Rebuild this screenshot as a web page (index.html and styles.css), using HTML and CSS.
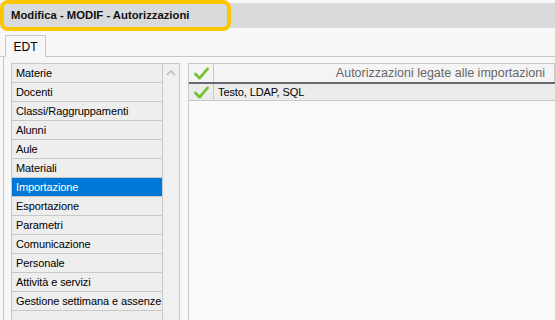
FILE: index.html
```html
<!DOCTYPE html>
<html>
<head>
<meta charset="utf-8">
<link rel="stylesheet" href="styles.css">
</head>
<body>
<div class="header">
  <div class="title-box">Modifica - MODIF - Autorizzazioni</div>
</div>
<div class="tabstrip">
  <div class="tab">EDT</div>
</div>
<div class="panel">
  <div class="list-frame">
    <ul class="list">
      <li>Materie</li>
      <li>Docenti</li>
      <li>Classi/Raggruppamenti</li>
      <li>Alunni</li>
      <li>Aule</li>
      <li>Materiali</li>
      <li class="selected">Importazione</li>
      <li>Esportazione</li>
      <li>Parametri</li>
      <li>Comunicazione</li>
      <li>Personale</li>
      <li>Attività e servizi</li>
      <li>Gestione settimana e assenze</li>
      <li></li>
    </ul>
    <div class="scroll">
      <svg width="12" height="8" viewBox="0 0 12 8"><path d="M2 6 L6 2 L10 6" fill="none" stroke="#bdbdbd" stroke-width="1.6"/></svg>
    </div>
  </div>
  <div class="grid">
    <div class="grid-head">
      <div class="check-cell"><svg class="check" viewBox="0 0 16 14"><path d="M1.5 7.5 L6 12 L14.5 2" fill="none" stroke="#76c035" stroke-width="3" stroke-linecap="round" stroke-linejoin="round"/></svg></div>
      <div class="head-label">Autorizzazioni legate alle importazioni</div>
    </div>
    <div class="grid-row">
      <div class="check-cell"><svg class="check" viewBox="0 0 16 14"><path d="M1.5 7.5 L6 12 L14.5 2" fill="none" stroke="#76c035" stroke-width="3" stroke-linecap="round" stroke-linejoin="round"/></svg></div>
      <div class="row-label">Testo, LDAP, SQL</div>
    </div>
  </div>
</div>
</body>
</html>
```

FILE: styles.css
```css
html, body {
  margin: 0;
  padding: 0;
  background: #f7f7f7;
  font-family: "Liberation Sans", Arial, sans-serif;
  font-size: 11px;
  color: #000;
  width: 555px;
  height: 320px;
  overflow: hidden;
}

body {
  display: flex;
  flex-direction: column;
}

.header {
  flex: none;
  height: 31px;
  background: linear-gradient(to bottom, transparent 0, transparent 3px, #d9dadc 3px, #d9dadc 28px, transparent 28px);
  display: flex;
}

.title-box {
  box-sizing: border-box;
  width: 231px;
  height: 31px;
  border: 4px solid #fcc600;
  border-radius: 8px;
  background: #d9dadc;
  font-weight: bold;
  font-size: 11.3px;
  color: #111;
  padding-left: 7px;
  line-height: 23px;
  white-space: nowrap;
}

.tabstrip {
  flex: none;
  display: flex;
  padding: 4px 0 0 5px;
  border-bottom: 1px solid #c8c8c8;
}

.tab {
  box-sizing: border-box;
  width: 41px;
  height: 22px;
  margin-bottom: -1px;
  border: 1px solid #c8c8c8;
  border-bottom: none;
  background: #f7f7f7;
  text-align: center;
  line-height: 22px;
  font-size: 12px;
}

.panel {
  flex: 1;
  min-height: 0;
  overflow: hidden;
  margin-left: 3px;
  border-left: 1px solid #c8c8c8;
  padding: 6px 0 0 7px;
  display: flex;
  gap: 8px;
}

.list-frame {
  display: flex;
  border: 1px solid #c8c8c8;
  border-bottom: none;
  align-self: flex-start;
}

.list {
  list-style: none;
  margin: 0;
  padding: 0;
  width: 150px;
}

.list li {
  height: 18px;
  line-height: 19px;
  border-bottom: 1px solid #c8c8c8;
  background: #eeeeee;
  padding-left: 4px;
  white-space: nowrap;
  overflow: hidden;
  letter-spacing: -0.1px;
}

.list li.selected {
  background: #0078d7;
  color: #fff;
}

.scroll {
  width: 17px;
  border-left: 1px solid #c8c8c8;
  background: #f0f0f0;
  display: flex;
  justify-content: center;
  align-items: flex-start;
  padding-top: 5px;
  box-sizing: border-box;
}

.grid {
  flex: 1;
  border: 1px solid #c8c8c8;
  border-right: none;
  border-bottom: none;
  background: #f9f9f9;
  align-self: stretch;
}

.grid-head {
  display: flex;
  height: 18px;
  border-bottom: 2px solid #666a6e;
  background: #f4f4f4;
}

.check-cell {
  width: 24px;
  border-right: 1px solid #c8c8c8;
  display: flex;
  align-items: center;
  justify-content: center;
}

.check {
  width: 15px;
  height: 13px;
}

.head-label {
  flex: 1;
  text-align: right;
  padding-right: 9px;
  color: #666;
  font-size: 12.5px;
  line-height: 18px;
  border-right: 1px solid #c8c8c8;
}

.grid-row {
  display: flex;
  height: 16px;
  border-bottom: 1px solid #c8c8c8;
  background: #ececec;
}

.row-label {
  padding-left: 4px;
  line-height: 16px;
  color: #000;
  letter-spacing: -0.1px;
}
```
